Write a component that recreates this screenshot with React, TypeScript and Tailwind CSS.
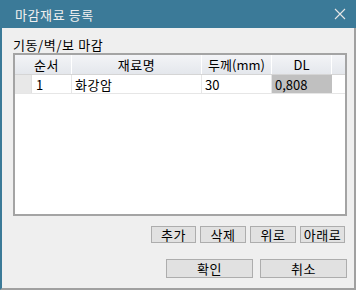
import React from "react";

const font = { fontFamily: '"Noto Sans CJK KR", "Noto Sans", sans-serif' };

function Btn({ label, w, h }: { label: string; w: string; h: string }) {
  return (
    <div
      className={`${w} ${h} flex items-center justify-center border border-[#adadad] bg-[#e1e1e1] text-[13px] leading-none text-black tracking-[0.5px]`}
    >
      {label}
    </div>
  );
}

export default function App() {
  return (
    <div className="w-[356px] h-[290px] flex flex-col bg-[#efefef] overflow-hidden" style={font}>
      <div className="h-[28px] shrink-0 bg-[#3b7a98] flex items-center justify-between pl-[15px] pr-[10px]">
        <span className="text-[13px] text-[#f0f0f0] leading-none tracking-[0.6px]">마감재료 등록</span>
        <svg width="12" height="12" viewBox="0 0 12 12">
          <path d="M1 1L11 11M11 1L1 11" stroke="#e6e6e6" strokeWidth="1.1" />
        </svg>
      </div>
      <div className="flex-1 flex flex-col border-l-2 border-l-[#3b7a98] border-r-2 border-r-[#a0a0a0] border-b-2 border-b-[#a0a0a0] pl-[11px] pr-[7px]">
        <div className="h-[25px] flex items-end pb-[2px] text-[13px] leading-none text-black tracking-[0.6px]">기동/벽/보 마감</div>
        <div className="h-[163px] border-2 border-[#a4a4a4] bg-white flex flex-col">
          <div className="h-[20px] flex border-b border-[#d5d5d5] bg-gradient-to-b from-[#f3f4f7] to-[#e4e7ec] text-[13px] leading-none text-black">
            <div className="w-[57px] flex items-center justify-end pr-[12px] border-r border-[#ffffff] tracking-[0.5px]">순서</div>
            <div className="w-[130px] flex items-center justify-center border-r border-[#ffffff] tracking-[0.5px]">재료명</div>
            <div className="w-[70px] flex items-center justify-center border-r border-[#ffffff]">두께(mm)</div>
            <div className="w-[60px] flex items-center justify-center border-r border-[#ffffff]">DL</div>
            <div className="flex-1"></div>
          </div>
          <div className="h-[19px] flex border-b border-[#e6e6e6] text-[13px] leading-none text-black">
            <div className="w-[17px] bg-[#e8e8e8] border-r border-[#e0e0e0]"></div>
            <div className="w-[40px] flex items-center pl-[4px] border-r border-[#e6e6e6]">1</div>
            <div className="w-[130px] flex items-center pl-[3px] border-r border-[#e6e6e6] tracking-[0.5px]">화강암</div>
            <div className="w-[70px] flex items-center pl-[3px] border-r border-[#e6e6e6]">30</div>
            <div className="w-[60px] flex items-center pl-[3px] bg-[#c0c0c0]">0,808</div>
          </div>
        </div>
        <div className="mt-[10px] flex justify-end gap-[4px] pr-[2px]">
          <Btn label="추가" w="w-[45px]" h="h-[17px]" />
          <Btn label="삭제" w="w-[46px]" h="h-[17px]" />
          <Btn label="위로" w="w-[46px]" h="h-[17px]" />
          <Btn label="아래로" w="w-[45px]" h="h-[17px]" />
        </div>
        <div className="mt-[16px] flex justify-end gap-[7px]">
          <Btn label="확인" w="w-[87px]" h="h-[19px]" />
          <Btn label="취소" w="w-[87px]" h="h-[19px]" />
        </div>
      </div>
    </div>
  );
}
